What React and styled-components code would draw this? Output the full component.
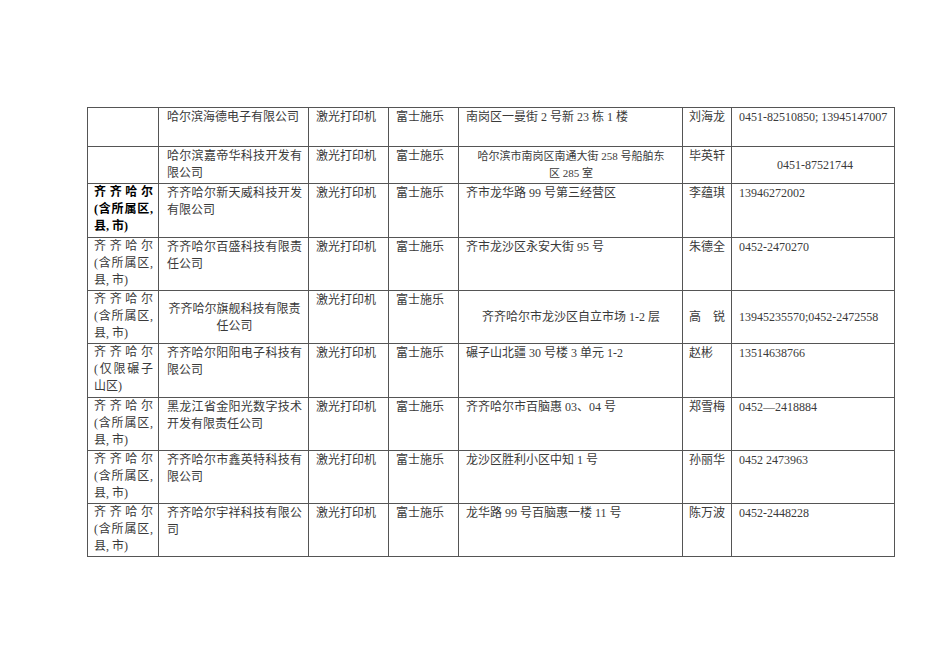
import React from 'react'
import styled, { createGlobalStyle } from 'styled-components'

const GlobalStyle = createGlobalStyle`
  html, body {
    margin: 0;
    padding: 0;
    background: #ffffff;
  }
`

const Page = styled.div`
  width: 950px;
  min-height: 672px;
  padding: 107px 0 0 87px;
  box-sizing: border-box;
  font-family: 'Liberation Serif', 'Noto Sans CJK SC', serif;
  font-size: 12px;
  color: #3a3a3a;
`

const Table = styled.table`
  border-collapse: collapse;
  table-layout: fixed;
  width: 808px;
`

const Col = styled.col`
  width: ${p => p.$w}px;
`

const Row = styled.tr`
  height: ${p => p.$h}px;
`

const Cell = styled.td`
  border: 1px solid #555;
  padding: 1px 6px 0 7px;
  line-height: 17px;
  vertical-align: ${p => (p.$middle ? 'middle' : 'top')};
  text-align: ${p => (p.$center ? 'center' : 'justify')};
  font-size: ${p => p.$size || 12}px;
  white-space: ${p => (p.$nowrap ? 'nowrap' : 'normal')};
  overflow: hidden;
`

const RegionCell = styled(Cell)`
  padding: 0 5px 0 6px;
  font-weight: ${p => (p.$bold ? 700 : 400)};
  color: ${p => (p.$bold ? '#000' : '#3a3a3a')};
`

const CompanyCell = styled(Cell)`
  padding-left: 8px;
  padding-right: 6px;
`

const ContactCell = styled(Cell)`
  padding: 1px 4px 0 6px;
  white-space: nowrap;
`

const PhoneCell = styled(Cell)`
  padding-right: 3px;
  white-space: nowrap;
`

const Line = styled.span`
  display: block;
  text-align: left;
  text-align-last: ${p => (p.$justify ? 'justify' : 'left')};
  white-space: nowrap;
`

const Region = ({ lines, bold }) => (
  <RegionCell $bold={bold}>
    {lines.map((l, i) => (
      <Line key={i} $justify={i < lines.length - 1}>
        {l}
      </Line>
    ))}
  </RegionCell>
)

const HQ = ['齐齐哈尔', '(含所属区,', '县, 市)']

const widths = [71, 150, 80, 70, 224, 49, 163]

const rows = [
  {
    h: 39,
    region: null,
    company: '哈尔滨海德电子有限公司',
    address: '南岗区一曼街 2 号新 23 栋 1 楼',
    contact: '刘海龙',
    phone: '0451-82510850; 13945147007',
  },
  {
    h: 37,
    region: null,
    company: '哈尔滨嘉帝华科技开发有限公司',
    address: (
      <>
        哈尔滨市南岗区南通大街 258 号船舶东
        <br />
        区 285 室
      </>
    ),
    addressCenter: true,
    addressSize: 11,
    contact: '毕英轩',
    phone: '0451-87521744',
    phoneCenter: true,
    phoneMiddle: true,
  },
  {
    h: 54,
    region: HQ,
    bold: true,
    company: '齐齐哈尔新天威科技开发有限公司',
    address: '齐市龙华路 99 号第三经营区',
    contact: '李蕴琪',
    phone: '13946272002',
  },
  {
    h: 53,
    region: HQ,
    company: '齐齐哈尔百盛科技有限责任公司',
    address: '齐市龙沙区永安大街 95 号',
    contact: '朱德全',
    phone: '0452-2470270',
  },
  {
    h: 53,
    region: HQ,
    company: '齐齐哈尔旗舰科技有限责任公司',
    companyCenter: true,
    address: '齐齐哈尔市龙沙区自立市场 1-2 层',
    addressCenter: true,
    addressMiddle: true,
    contact: '高\u3000锐',
    contactMiddle: true,
    phone: '13945235570;0452-2472558',
    phoneMiddle: true,
  },
  {
    h: 54,
    region: ['齐齐哈尔', '(仅限碾子', '山区)'],
    company: '齐齐哈尔阳阳电子科技有限公司',
    address: '碾子山北疆 30 号楼 3 单元 1-2',
    contact: '赵彬',
    phone: '13514638766',
  },
  {
    h: 53,
    region: HQ,
    company: '黑龙江省金阳光数字技术开发有限责任公司',
    address: '齐齐哈尔市百脑惠 03、04 号',
    contact: '郑雪梅',
    phone: '0452—2418884',
  },
  {
    h: 53,
    region: HQ,
    company: '齐齐哈尔市鑫英特科技有限公司',
    address: '龙沙区胜利小区中知 1 号',
    contact: '孙丽华',
    phone: '0452 2473963',
  },
  {
    h: 53,
    region: HQ,
    company: '齐齐哈尔宇祥科技有限公司',
    address: '龙华路 99 号百脑惠一楼 11 号',
    contact: '陈万波',
    phone: '0452-2448228',
  },
]

export default function App() {
  return (
    <>
      <GlobalStyle />
      <Page>
        <Table>
          <colgroup>
            {widths.map((w, i) => (
              <Col key={i} $w={w} />
            ))}
          </colgroup>
          <tbody>
            {rows.map((r, i) => (
              <Row key={i} $h={r.h}>
                {r.region ? <Region lines={r.region} bold={r.bold} /> : <Cell />}
                <CompanyCell $center={r.companyCenter} $middle={r.companyCenter}>
                  {r.company}
                </CompanyCell>
                <Cell>激光打印机</Cell>
                <Cell>富士施乐</Cell>
                <Cell
                  $center={r.addressCenter}
                  $middle={r.addressMiddle}
                  $size={r.addressSize}
                  $nowrap={!!r.addressSize}
                >
                  {r.address}
                </Cell>
                <ContactCell $middle={r.contactMiddle}>{r.contact}</ContactCell>
                <PhoneCell $center={r.phoneCenter} $middle={r.phoneMiddle}>
                  {r.phone}
                </PhoneCell>
              </Row>
            ))}
          </tbody>
        </Table>
      </Page>
    </>
  )
}
